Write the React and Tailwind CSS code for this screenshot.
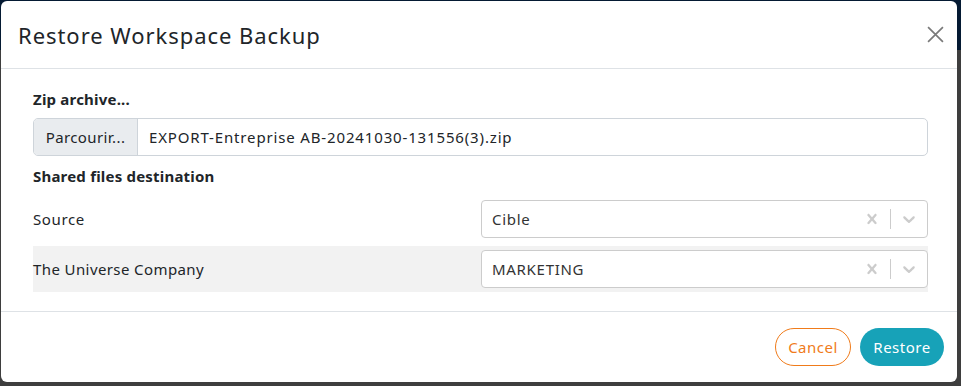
import React from "react";

function XIcon({ className }) {
  return (
    <svg viewBox="0 0 20 20" className={className} fill="currentColor">
      <path d="M14.348 14.849c-0.469 0.469-1.229 0.469-1.697 0l-2.651-3.030-2.651 3.029c-0.469 0.469-1.229 0.469-1.697 0-0.469-0.469-0.469-1.229 0-1.697l2.758-3.15-2.759-3.152c-0.469-0.469-0.469-1.228 0-1.697s1.228-0.469 1.697 0l2.652 3.031 2.651-3.031c0.469-0.469 1.228-0.469 1.697 0s0.469 1.229 0 1.697l-2.758 3.152 2.758 3.15c0.469 0.469 0.469 1.229 0 1.698z" />
    </svg>
  );
}

function Chevron({ className }) {
  return (
    <svg viewBox="0 0 20 20" className={className} fill="currentColor">
      <path d="M4.516 7.548c0.436-0.446 1.043-0.481 1.576 0l3.908 3.747 3.908-3.747c0.533-0.481 1.141-0.446 1.574 0 0.436 0.445 0.408 1.197 0 1.615-0.406 0.418-4.695 4.502-4.695 4.502-0.217 0.223-0.502 0.335-0.787 0.335s-0.57-0.112-0.789-0.335c0 0-4.287-4.084-4.695-4.502s-0.436-1.170 0-1.615z" />
    </svg>
  );
}

function Select({ value }) {
  return (
    <div className="flex h-[38px] w-[447px] items-center rounded-[4px] border border-[#cccccc] bg-white">
      <div className="flex-1 pl-[10px] text-[15px] tracking-[0.7px] text-[#333333]">{value}</div>
      <div className="flex items-center">
        <div className="px-[8px] text-[#cccccc]">
          <XIcon className="h-[20px] w-[20px]" />
        </div>
        <div className="h-[20px] w-px bg-[#cccccc]" />
        <div className="px-[8px] text-[#cccccc]">
          <Chevron className="h-[20px] w-[20px]" />
        </div>
      </div>
    </div>
  );
}

export default function App() {
  return (
    <div
      className="relative h-[386px] w-[961px] overflow-hidden bg-[#3e3e3e]"
      style={{ fontFamily: '"Noto Sans", "Open Sans", sans-serif' }}
    >
      <div className="absolute left-0 right-0 top-0 h-[50px] bg-[#051a33]" />
      <div className="absolute left-[1px] top-[1px] flex h-[381px] w-[956px] flex-col rounded-[6px] bg-white text-[#212529]">
        <div className="flex h-[68px] items-center justify-between border-b border-[#dee2e6] pl-[17px] pr-[13px]">
          <div className="text-[22px] leading-none tracking-[0.95px]">Restore Workspace Backup</div>
          <svg viewBox="0 0 16 16" className="h-[17px] w-[17px] text-[#7a7a7a]" stroke="currentColor" strokeWidth="1.6" fill="none">
            <path d="M1 1L15 15M15 1L1 15" />
          </svg>
        </div>
        <div className="flex flex-1 flex-col pl-[32px] pr-[29px] pt-[20px]">
          <div className="text-[15px] font-bold leading-[20px] tracking-[0.2px]">Zip archive...</div>
          <div className="mt-[9px] flex h-[38px] overflow-hidden rounded-[5px] border border-[#ced4da]">
            <div className="flex w-[104px] items-center justify-center border-r border-[#ced4da] bg-[#e9ecef] text-[15px] tracking-[0.4px]">
              Parcourir...
            </div>
            <div className="flex flex-1 items-center pl-[11px] text-[15px] tracking-[0.85px]">
              EXPORT-Entreprise AB-20241030-131556(3).zip
            </div>
          </div>
          <div className="mt-[10px] text-[15px] font-bold leading-[20px] tracking-[0.2px]">Shared files destination</div>
          <div className="mt-[10px] flex h-[46px] items-center justify-between">
            <div className="text-[15px] tracking-[0.6px]">Source</div>
            <Select value="Cible" />
          </div>
          <div className="mt-[4px] flex h-[46px] items-center justify-between bg-[#f2f2f2]">
            <div className="text-[15px] tracking-[0.4px]">The Universe Company</div>
            <Select value="MARKETING" />
          </div>
        </div>
        <div className="flex h-[71px] items-center justify-end gap-[9px] border-t border-[#dee2e6] pr-[13px]">
          <button className="h-[38px] w-[76px] rounded-full border border-[#f07b1a] bg-white text-[15px] tracking-[0.5px] text-[#f07b1a]">
            Cancel
          </button>
          <button className="h-[38px] w-[84px] rounded-full bg-[#17a2b8] text-[15px] tracking-[0.5px] text-white">
            Restore
          </button>
        </div>
      </div>
    </div>
  );
}
